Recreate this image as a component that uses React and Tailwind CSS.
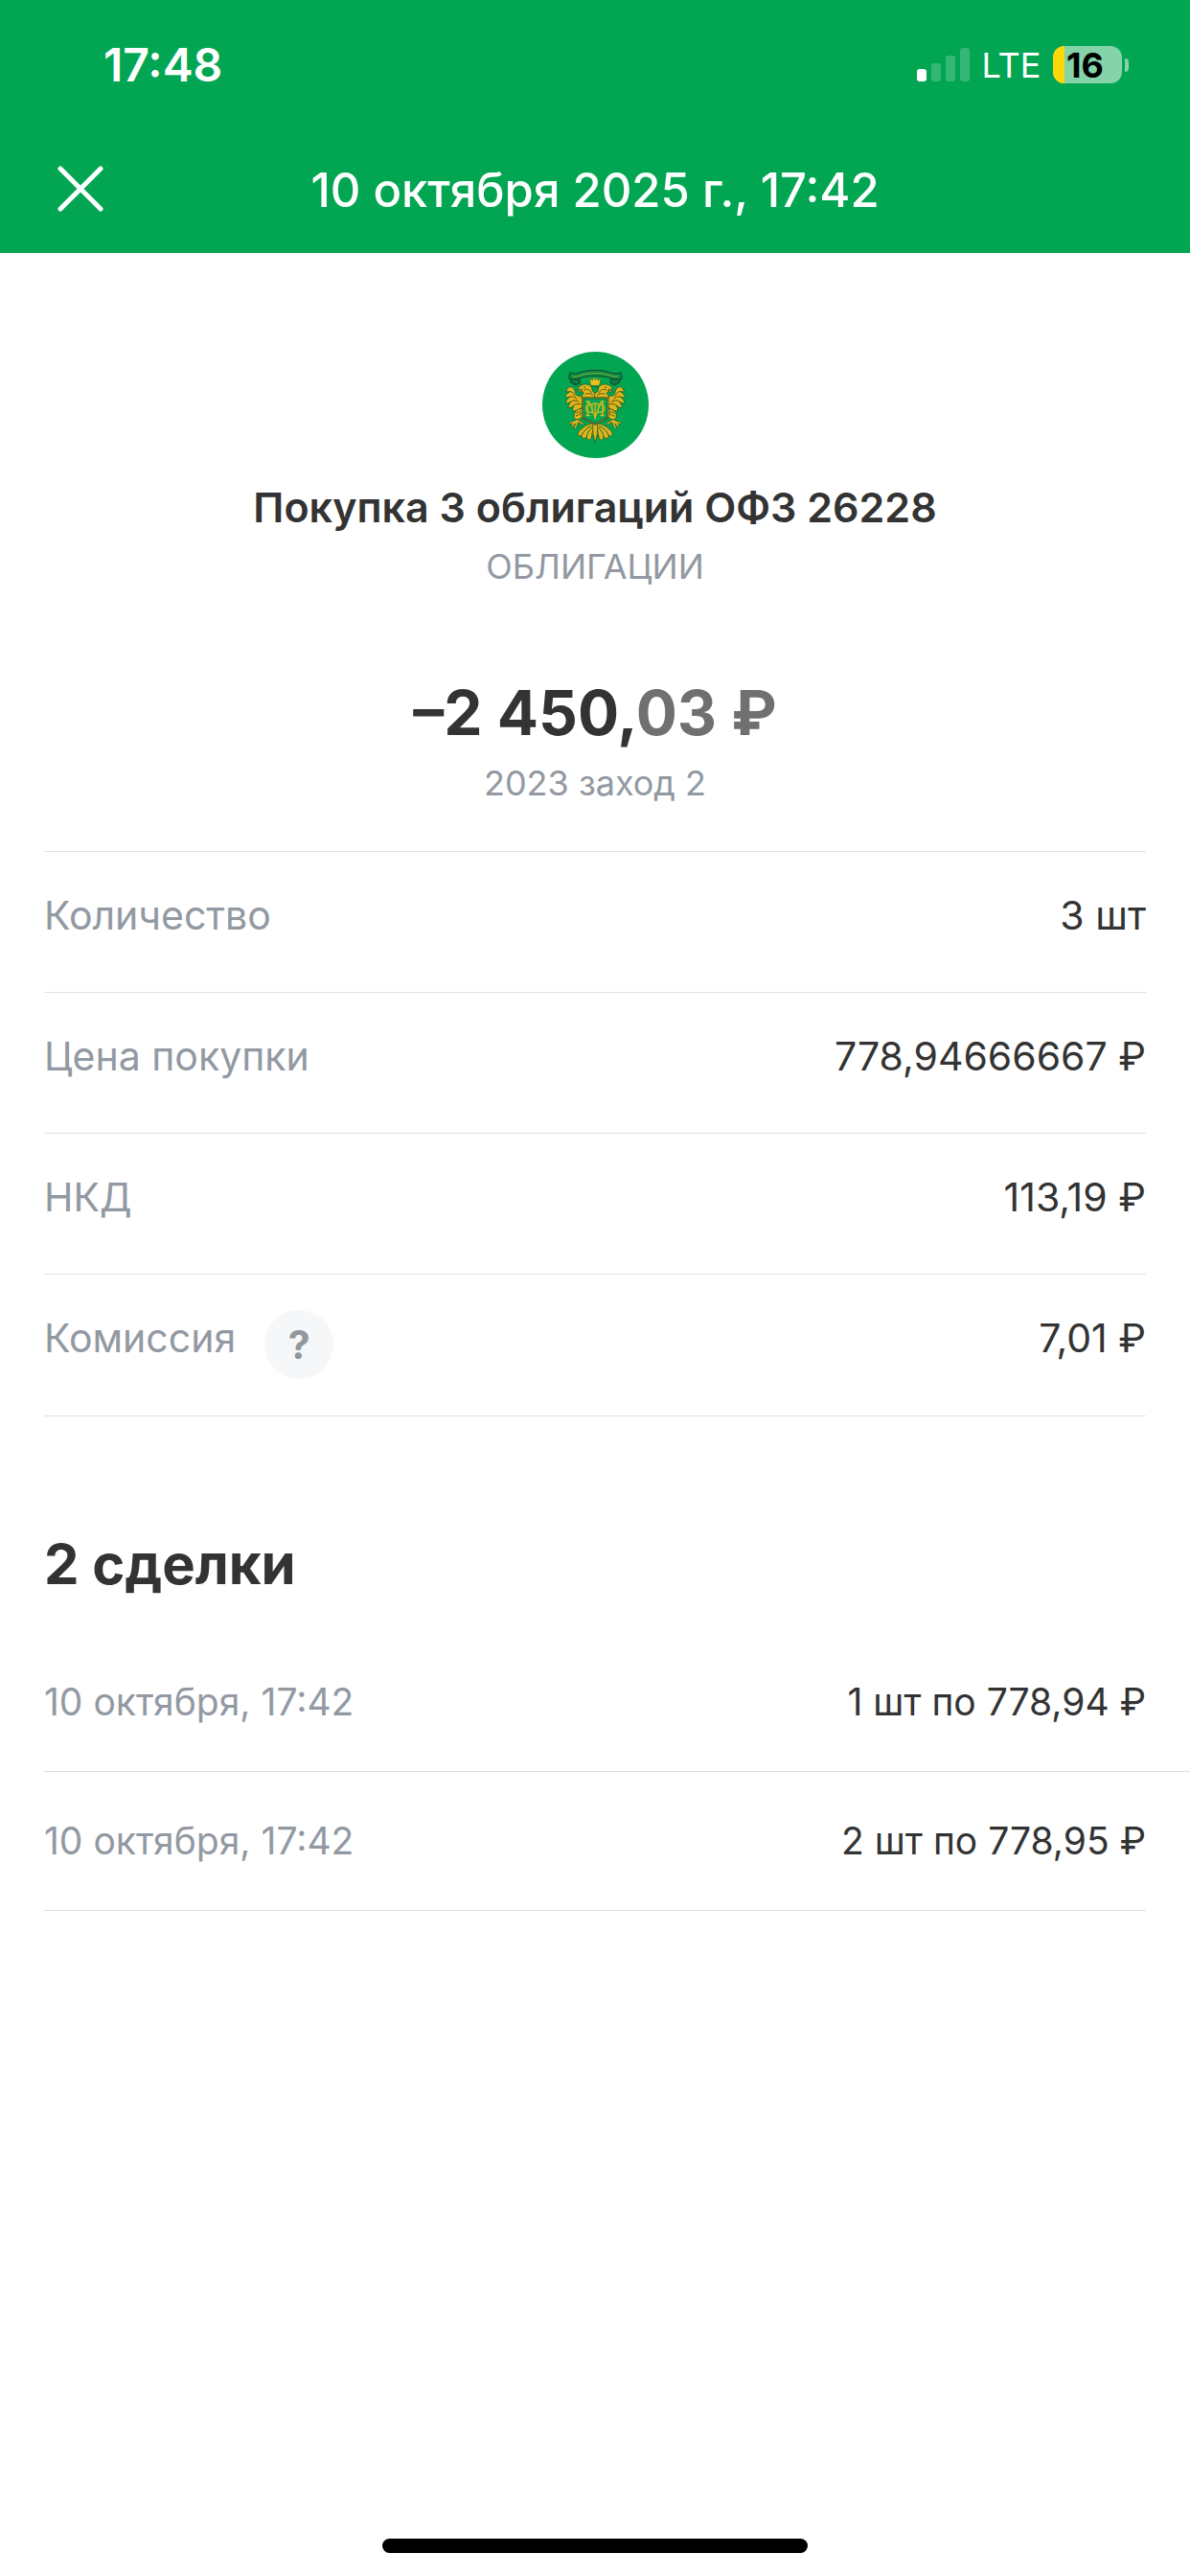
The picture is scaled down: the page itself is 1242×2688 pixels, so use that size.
const details = [
  { label: "Количество", value: "3 шт" },
  { label: "Цена покупки", value: "778,94666667 ₽" },
  { label: "НКД", value: "113,19 ₽" },
  { label: "Комиссия", value: "7,01 ₽", hint: true },
];

const trades = [
  { id: 1, date: "10 октября, 17:42", value: "1 шт по 778,94 ₽" },
  { id: 2, date: "10 октября, 17:42", value: "2 шт по 778,95 ₽" },
];

function SignalIcon() {
  return (
    <svg width="55" height="35" viewBox="0 0 55 35" fill="#fff" aria-hidden="true">
      <rect x="0" y="22" width="10" height="13" rx="3" />
      <rect x="15" y="16" width="10" height="19" rx="3" opacity="0.2" />
      <rect x="30" y="8" width="10" height="27" rx="3" opacity="0.2" />
      <rect x="45" y="0" width="10" height="35" rx="3" opacity="0.2" />
    </svg>
  );
}

function Battery({ level }) {
  return (
    <div className="flex items-center gap-[3px]">
      <div className="flex h-[39px] w-[72px] items-center rounded-[12px] bg-[#84d3a9]">
        <span className="h-[39px] w-3 shrink-0 rounded-l-[12px] bg-[#fed709]" />
        <span className="pl-[2px] text-[36px] leading-[48px] font-bold text-black">{level}</span>
      </div>
      <span className="h-[14px] w-1 rounded-r-full bg-[#84d3a9]" />
    </div>
  );
}

function StatusBar() {
  return (
    <div className="flex h-[135px] items-center justify-between pr-16 pl-[108px]">
      <span className="text-[48px] leading-[60px] font-semibold">17:48</span>
      <div className="flex items-center">
        <SignalIcon />
        <span className="w-[87px] text-center text-[36px] leading-[48px]">LTE</span>
        <Battery level={16} />
      </div>
    </div>
  );
}

// One half of the eagle, mirrored for the other side
function EagleHalf() {
  return (
    <g strokeLinejoin="round" strokeLinecap="round">
      {/* wing */}
      <path
        d="M180 172 C162 180 152 176 150 164 C148 152 142 148 134 147 C128 149 124 156 121 162 C126 164 131 162 134 162 C126 168 120 172 119 180 C124 182 130 180 134 178 C126 186 121 190 121 199 C128 200 134 196 138 193 C132 200 127 207 129 214 C138 213 144 208 147 205 C143 212 141 218 144 224 C156 223 168 216 176 208 Z"
        fill="#dfb61a"
        stroke="#12492a"
        strokeWidth="2"
      />
      <path
        d="M134 162 C142 162 146 168 150 176 M134 178 C142 176 150 180 156 186 M138 193 C144 188 154 190 162 194 M147 205 C152 200 160 200 168 202"
        fill="none"
        stroke="#5d5718"
        strokeWidth="3"
      />
      {/* head and neck */}
      <path
        d="M213 182 H170 C168 178 172 172 178 168 C174 164 170 160 168 156 L158 158 C160 146 170 139 184 139 C198 140 206 150 207 158 C209 163 212 164 214 166 Z"
        fill="#dfb61a"
        stroke="#12492a"
        strokeWidth="2"
      />
      <path d="M178 158 C186 152 196 156 202 166 M184 170 C192 166 200 168 206 174" fill="none" stroke="#5d5718" strokeWidth="3" />
      <path d="M158 158 L172 154 L166 166 Z" fill="#b98f18" stroke="#12492a" strokeWidth="1.5" />
      <circle cx="180" cy="149" r="2.5" fill="#12492a" />
      {/* leg and claw */}
      <path
        d="M174 216 C162 216 153 220 149 228 C144 238 146 246 152 249 C160 252 166 248 170 242 L180 250 Z"
        fill="#dfb61a"
        stroke="#12492a"
        strokeWidth="2"
      />
      <path d="M153 230 L161 226 M153 239 L161 235 M166 224 V236" stroke="#5d5718" strokeWidth="3" />
      <path
        d="M158 252 C152 256 144 262 135 260 M154 256 L140 269 M158 256 L150 276 M160 254 L174 264"
        fill="none"
        stroke="#12492a"
        strokeWidth="8"
      />
      <path
        d="M158 252 C152 256 144 262 135 260 M154 256 L140 269 M158 256 L150 276 M160 254 L174 264"
        fill="none"
        stroke="#dfb61a"
        strokeWidth="5"
      />
      {/* tail feathers */}
      <path
        d="M213 260 C200 262 184 266 172 278 C164 284 158 290 159 298 C162 304 168 302 171 299 C170 306 174 311 180 309 C184 308 186 304 187 301 C186 309 188 315 194 314 C199 312 201 308 202 304 L213 290 Z"
        fill="#dfb61a"
        stroke="#12492a"
        strokeWidth="2"
      />
      <path
        d="M200 270 C188 276 178 284 171 298 M204 274 C196 282 190 290 187 300 M208 278 C204 288 203 296 202 304"
        fill="none"
        stroke="#14693a"
        strokeWidth="3"
      />
      {/* ribbon end */}
      <path
        d="M138 116 C130 122 134 132 142 138 C150 144 160 142 166 134 L162 122 Z"
        fill="#0d6b3a"
        stroke="#12492a"
        strokeWidth="3"
      />
      <path d="M144 128 C148 132 154 134 160 130" fill="none" stroke="#0aa656" strokeWidth="3" />
    </g>
  );
}

function Emblem() {
  return (
    <svg className="size-[111px]" viewBox="47 37 334 334" role="img" aria-label="ОФЗ">
      <circle cx="214" cy="204" r="167" fill="#02a652" />
      <EagleHalf />
      <g transform="matrix(-1 0 0 1 426 0)">
        <EagleHalf />
      </g>
      <path
        d="M206 262 C204 286 207 304 213 322 C219 304 222 286 220 262 Z"
        fill="#dfb61a"
        stroke="#12492a"
        strokeWidth="2"
      />
      {/* ribbon */}
      <path
        d="M134 102 C150 110 162 102 180 98 C202 94 226 94 246 98 C264 102 276 110 294 102 L298 120 C280 128 264 120 246 116 C226 112 202 112 180 116 C164 120 148 128 130 120 Z"
        fill="#0c8a49"
        stroke="#12492a"
        strokeWidth="3"
      />
      <path
        d="M144 115 C160 116 168 110 184 107 C204 104 222 104 242 107 C258 110 268 116 284 115"
        fill="none"
        stroke="#7fae2c"
        strokeWidth="5"
        strokeDasharray="4 2"
      />
      {/* crown */}
      <path
        d="M200 143 L195 120 L205 128 L207 117 L213 126 L219 117 L221 128 L231 120 L226 143 Z"
        fill="#eec21a"
        stroke="#12492a"
        strokeWidth="1"
      />
      <path d="M202 147 H224 L222 160 L213 168 L204 160 Z" fill="#02a652" stroke="#12492a" strokeWidth="2" />
      {/* shield with monogram */}
      <path
        d="M174 182 H253 V236 C253 252 232 252 213 265 C194 252 174 252 174 236 Z"
        fill="#02a652"
        stroke="#12492a"
        strokeWidth="6"
      />
      <path
        d="M174 182 H253 V236 C253 252 232 252 213 265 C194 252 174 252 174 236 Z"
        fill="none"
        stroke="#dfb61a"
        strokeWidth="2"
      />
      <g fill="none" stroke="#dfb61a" strokeWidth="4">
        <path d="M190 193 V237 M184 237 H197 M184 193 H194 L213 244 L232 193 H242 M236 193 V237 M229 237 H242" />
        <path d="M213 200 V250 M205 199 H221" />
        <path d="M206 203 C192 200 184 206 184 215 C184 224 192 229 206 227 M220 203 C234 200 242 206 242 215 C242 224 234 229 220 227" />
        <path d="M204 203 V228 M222 203 V228" strokeWidth="3" />
      </g>
    </svg>
  );
}

function Header() {
  return (
    <header className="bg-[#02a652] text-white">
      <StatusBar />
      <div className="grid h-[129px] grid-cols-[168px_1fr_168px]">
        <button type="button" aria-label="Закрыть" className="h-[124px] pl-[60px]">
          <svg width="48" height="48" viewBox="0 0 48 48" stroke="#fff" strokeWidth="5" strokeLinecap="round">
            <path d="M3 3 L45 45 M45 3 L3 45" />
          </svg>
        </button>
        <h1 className="pt-[34px] text-center text-[49px] leading-[60px] font-medium">10 октября 2025 г., 17:42</h1>
      </div>
    </header>
  );
}

export default function App() {
  return (
    <div className="flex min-h-screen flex-col bg-white font-['Inter','Noto_Sans',sans-serif] text-[#333333]">
      <Header />

      <main className="flex flex-col">
        <section className="flex flex-col items-center pt-[103px] text-center">
          <Emblem />
          <h2 className="mt-[25px] text-[43px] leading-[52px] font-semibold">Покупка 3 облигаций ОФЗ 26228</h2>
          <p className="mt-[12px] text-[36px] leading-[48px] text-[#9299a2]">ОБЛИГАЦИИ</p>
          <p className="mt-[91px] text-[64px] leading-[76px] font-bold">
            –2 450,<span className="text-[#707070]">03 ₽</span>
          </p>
          <p className="mt-[11px] text-[36px] leading-[48px] text-[#9299a2]">2023 заход 2</p>
        </section>

        <dl className="mx-[46px] mt-[47px] border-y border-[#e0e1e3]">
          {details.map((item) => (
            <div
              key={item.label}
              className="flex h-[147px] justify-between border-b border-[#e0e1e3] pt-[41px] text-[41px] leading-[50px] last:border-b-0"
            >
              <dt className="flex text-[#9299a2]">
                {item.label}
                {item.hint && (
                  <button
                    type="button"
                    aria-label="Подробнее о комиссии"
                    className="-mt-[4px] ml-[30px] size-[72px] rounded-full bg-[#f5f7f8] text-[41px] font-bold text-[#92979d]"
                  >
                    ?
                  </button>
                )}
              </dt>
              <dd>{item.value}</dd>
            </div>
          ))}
        </dl>

        <section>
          <h2 className="mt-[118px] pl-[46px] text-[58px] leading-[72px] font-bold">2 сделки</h2>
          <ul className="mt-[36px]">
            {trades.map((trade) => (
              <li
                key={trade.id}
                className="ml-[46px] flex h-[145px] items-center justify-between border-b border-[#dcdddf] pr-[46px] text-[39px] leading-[48px] last:mr-[46px] last:pr-0"
              >
                <span className="text-[#9299a2]">{trade.date}</span>
                <span>{trade.value}</span>
              </li>
            ))}
          </ul>
        </section>
      </main>

      <div className="mx-auto mt-auto mb-[24px] h-[15px] w-[444px] rounded-full bg-black" />
    </div>
  );
}
